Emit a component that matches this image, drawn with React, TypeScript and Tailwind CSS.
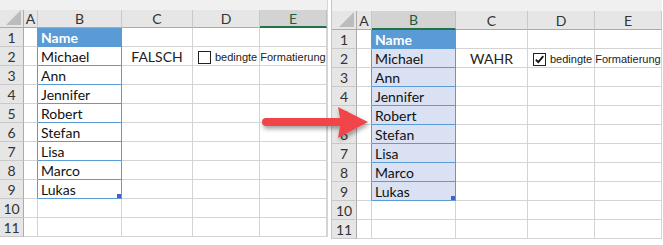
import React from "react";

type PanelProps = {
  rowHdrW: string;
  colW: string[]; // A..E width classes
  bandH: string;
  hdrH: string;
  selCol: number;
  fill: boolean;
  checked: boolean;
  boolText: string;
  checkPos: string;
};

const names = ["Michael", "Ann", "Jennifer", "Robert", "Stefan", "Lisa", "Marco", "Lukas"];
const cols = ["A", "B", "C", "D", "E"];

function Panel({ rowHdrW, colW, bandH, hdrH, selCol, fill, checked, boolText, checkPos }: PanelProps) {
  const rows = Array.from({ length: 11 }, (_, i) => i + 1);
  return (
    <div className="relative flex flex-col bg-white font-['Lato','Noto_Sans',sans-serif]">
      <div className={"bg-[#f0f0f0] " + bandH} />
      <div className={"flex " + hdrH}>
        <div className={"relative bg-[#e6e6e6] border-r border-b border-[#ababab] " + rowHdrW}>
          <div className="absolute right-[2px] bottom-[2px] w-0 h-0 border-l-[15px] border-l-transparent border-b-[15px] border-b-[#bcbcbc]" />
        </div>
        {cols.map((c, i) => {
          const sel = i === selCol;
          return (
            <div
              key={c}
              className={
                "flex items-center justify-center text-[14px] " +
                colW[i] +
                (sel
                  ? " bg-[#d3d3d3] border-r border-r-[#c0c0c0] border-b-2 border-b-[#217346] text-[#1e5c3a]"
                  : " bg-[#e6e6e6] border-r border-r-[#c9c9c9] border-b border-b-[#ababab] text-[#333]")
              }
            >
              {c}
            </div>
          );
        })}
      </div>
      {rows.map((r) => {
        const inTable = r <= 9;
        return (
          <div key={r} className="flex h-[19px]">
            <div
              className={
                "flex items-center justify-center bg-[#e6e6e6] border-r border-r-[#ababab] border-b border-b-[#c9c9c9] text-[14px] text-[#333] " +
                rowHdrW
              }
            >
              {r}
            </div>
            <div
              className={
                "border-b border-b-[#d4d4d4] border-r " +
                colW[0] +
                (inTable ? " border-r-[#5b9bd5]" : " border-r-[#d4d4d4]")
              }
            />
            <div
              className={
                "relative flex items-center pl-[3px] text-[14px] border-r border-b " +
                colW[1] +
                (r === 1
                  ? " bg-[#5b9bd5] border-[#5b9bd5] text-white font-bold"
                  : inTable
                  ? (fill ? " bg-[#d9e1f2]" : " bg-white") + " border-[#5b9bd5] text-[#111]"
                  : " border-[#d4d4d4]")
              }
            >
              {r === 1 ? "Name" : inTable ? names[r - 2] : ""}
              {r === 9 && <div className="absolute right-0 bottom-0 w-[4px] h-[4px] bg-[#4a5fc1]" />}
            </div>
            <div
              className={
                "flex items-center justify-center text-[14px] text-[#222] border-r border-b border-[#d4d4d4] " +
                colW[2]
              }
            >
              {r === 2 ? boolText : ""}
            </div>
            <div className={"border-r border-b border-[#d4d4d4] " + colW[3]} />
            <div className={"border-r border-b border-[#d4d4d4] " + colW[4]} />
          </div>
        );
      })}
      {/* checkbox form control floating over the cells */}
      <div className={"absolute flex items-center gap-[4px] " + checkPos}>
        <div className="w-[13px] h-[13px] border border-[#222] bg-white flex items-center justify-center">
          {checked && (
            <svg width="11" height="11" viewBox="0 0 11 11">
              <path d="M1.8 5.6 L4.3 8.2 L9.3 2.2" fill="none" stroke="#111" strokeWidth="1.8" />
            </svg>
          )}
        </div>
        <span className="text-[11px] leading-[13px] text-[#222] whitespace-nowrap font-['Liberation_Sans',Arial,sans-serif]">
          bedingte Formatierung
        </span>
      </div>
    </div>
  );
}

export default function App() {
  return (
    <div className="relative w-[663px] h-[245px] bg-white overflow-hidden">
      <div className="flex items-start gap-[3px]">
        <div className="border-r border-[#d4d4d4]">
          <Panel
            rowHdrW="w-[24px]"
            colW={["w-[14px]", "w-[84px]", "w-[71px]", "w-[67px]", "w-[67px]"]}
            bandH="h-[10px]"
            hdrH="h-[18px]"
            selCol={4}
            fill={false}
            checked={false}
            boolText="FALSCH"
            checkPos="left-[198px] top-[51px]"
          />
        </div>
        <div className="border-l border-[#c6c6c6]">
          <Panel
            rowHdrW="w-[25px]"
            colW={["w-[15px]", "w-[84px]", "w-[72px]", "w-[67px]", "w-[67px]"]}
            bandH="h-[11px]"
            hdrH="h-[19px]"
            selCol={1}
            fill={true}
            checked={true}
            boolText="WAHR"
            checkPos="left-[201px] top-[53px]"
          />
        </div>
      </div>
      {/* red arrow */}
      <svg className="absolute left-[252px] top-[100px]" width="125" height="48" viewBox="0 0 125 48">
        <defs>
          <filter id="sh" x="-20%" y="-30%" width="140%" height="170%">
            <feDropShadow dx="1" dy="3" stdDeviation="2" floodColor="#000" floodOpacity="0.35" />
          </filter>
        </defs>
        <g filter="url(#sh)">
          <path d="M14 18 L88 18 L86 7 L116 22 L86 38 L88 26 L14 26 A4 4 0 0 1 14 18 Z" fill="#f1454a" />
        </g>
      </svg>
    </div>
  );
}
